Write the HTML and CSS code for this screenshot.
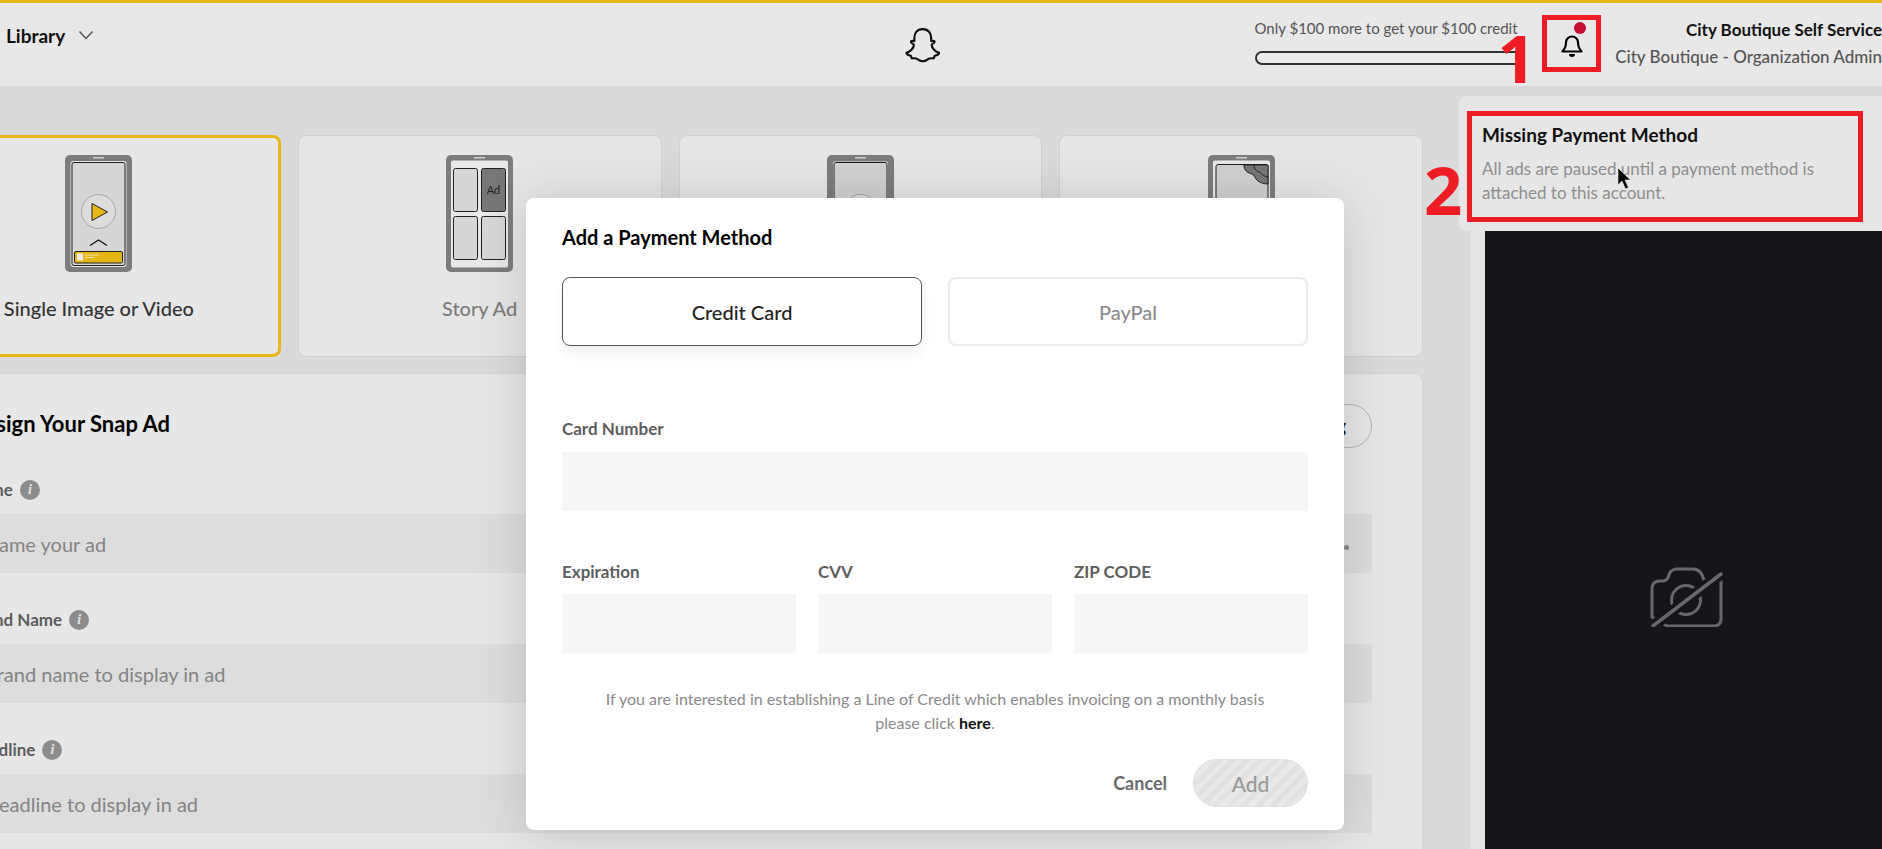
FILE: index.html
```html
<!DOCTYPE html>
<html lang="en">
<head>
<meta charset="utf-8">
<title>Add a Payment Method</title>
<link rel="stylesheet" href="styles.css">
</head>
<body>
<div class="page">
  <header class="topbar">
    <div class="nav-left">
      <span class="nav-title">Library</span>
      <svg class="chev" viewBox="0 0 16 10" width="16" height="10"><path d="M1.5 1.5 8 8.5l6.500-7" fill="none" stroke="#555" stroke-width="1.500"/></svg>
    </div>
    <svg class="ghost" viewBox="0 0 36 36" width="36" height="38"><path d="M18 2C11.500 2 9.500 7 9.500 11v3c-1.500 0-3-.5-3.500.5-.5 1.500 2.500 2 3 3.500 0 3-4 7-7.500 8 0 2 3.500 2.500 4.500 3 .5 1 .5 2.500 1 2.500 2 0 4-.5 6 1s3.500 2 5 2 3-.5 5-2 4-1 6-1c.5 0 .5-1.500 1-2.500 1-.5 4.500-1 4.500-3-3.500-1-7.500-5-7.500-8 .5-1.500 3.500-2 3-3.500-.5-1-2-.5-3.500-.5v-3C26.500 7 24.500 2 18 2Z" fill="none" stroke="#111" stroke-width="2.200" stroke-linejoin="round"/></svg>
    <div class="credit">
      <div class="credit-text">Only $100 more to get your $100 credit</div>
      <div class="credit-bar"></div>
      <span class="mark mark-one">1</span>
    </div>
    <div class="bell-box">
      <svg viewBox="0 0 22 24" width="22" height="24"><path d="M3.500 15.500c1-1.500 1.500-3 1.500-6a6 6 0 0 1 12 0c0 3 .5 4.500 1.500 6l2 3H1.500Z" fill="none" stroke="#000" stroke-width="2.200" stroke-linejoin="round"/><path d="M8 21h6a3 3 0 0 1-6 0Z" fill="#000"/></svg>
      <span class="bell-dot"></span>
    </div>
    <div class="account">
      <div class="account-name">City Boutique Self Service</div>
      <div class="account-org">City Boutique - Organization Admin</div>
    </div>
  </header>

  <div class="content">
    <main class="main">
      <section class="types">
        <article class="type-card is-selected">
          <svg class="phone" viewBox="0 0 67 117" width="67" height="117">
            <rect width="67" height="117" rx="5" fill="#7c7c7c"/>
            <rect x="28" y="2" width="11" height="1.500" fill="#d0d0d0"/>
            <rect x="6" y="6.500" width="55" height="105" rx="2" fill="#d6d6d6" stroke="#e8e8e8" stroke-width="1"/>
            <rect x="7" y="7.500" width="53" height="103" rx="2" fill="#d6d6d6" stroke="#1d1d1d" stroke-width="1"/>
            <circle cx="33.500" cy="56.500" r="17" fill="#dcdcdc" stroke="#999" stroke-width=".8"/>
            <path d="M27 48.500 42.500 57 27 65.500Z" fill="#e6b516" stroke="#222" stroke-width="1"/>
            <path d="M25 90.500 33.500 85 42 90.500" fill="none" stroke="#111" stroke-width="1.300"/>
            <rect x="9.500" y="96.500" width="48" height="11.500" rx="1.500" fill="#e6b516" stroke="#222" stroke-width="1"/>
            <rect x="12" y="98.500" width="6" height="7" fill="#eee"/>
            <path d="M20 100h14M20 102.500h9" stroke="#f3e3a8" stroke-width="1"/>
          </svg>
          <div class="type-label">Single Image or Video</div>
        </article>
        <article class="type-card">
          <svg class="phone" viewBox="0 0 67 117" width="67" height="117">
            <rect width="67" height="117" rx="5" fill="#7c7c7c"/>
            <rect x="28" y="2" width="11" height="1.500" fill="#d0d0d0"/>
            <rect x="5" y="5.500" width="57" height="107" rx="2" fill="#e8e8e8"/>
            <rect x="7.500" y="13.500" width="24" height="43" rx="2" fill="#d6d6d6" stroke="#222"/>
            <rect x="35.500" y="13.500" width="24" height="43" rx="2" fill="#777" stroke="#222"/>
            <rect x="7.500" y="61.500" width="24" height="43" rx="2" fill="#d6d6d6" stroke="#222"/>
            <rect x="35.500" y="61.500" width="24" height="43" rx="2" fill="#d6d6d6" stroke="#222"/>
            <text x="47.500" y="39" class="ad-text" text-anchor="middle">Ad</text>
          </svg>
          <div class="type-label is-muted">Story Ad</div>
        </article>
        <article class="type-card">
          <svg class="phone" viewBox="0 0 67 117" width="67" height="117">
            <rect width="67" height="117" rx="5" fill="#7c7c7c"/>
            <rect x="28" y="2" width="11" height="1.500" fill="#d0d0d0"/>
            <rect x="6" y="6.500" width="55" height="105" rx="2" fill="#e8e8e8"/>
            <rect x="7" y="7.500" width="53" height="103" rx="2" fill="#d0d0d0" stroke="#1d1d1d"/>
            <circle cx="33.500" cy="56.500" r="17" fill="#dcdcdc" stroke="#999" stroke-width=".8"/>
          </svg>
        </article>
        <article class="type-card">
          <svg class="phone" viewBox="0 0 67 117" width="67" height="117">
            <rect width="67" height="117" rx="5" fill="#7c7c7c"/>
            <rect x="28" y="2" width="11" height="1.500" fill="#d0d0d0"/>
            <rect x="5" y="5.500" width="57" height="107" rx="2" fill="#e8e8e8"/>
            <rect x="8" y="9.500" width="52" height="100" rx="2" fill="#d0d0d0" stroke="#1d1d1d"/>
            <path d="M36 10c0 6 4 8 8 9 3 1 3 5 6 7 3 2 6 3 10 3V10Z" fill="#777" stroke="#222"/>
            <path d="M46 10c0 5 3 6 5 7 3 1 3 4 9 5" fill="none" stroke="#222"/>
          </svg>
        </article>
      </section>

      <section class="design">
        <div class="design-head">
          <h2 class="design-title">Design Your Snap Ad</h2>
          <span class="pill">g</span>
        </div>
        <div class="field">
          <div class="field-label">Name <span class="info">i</span></div>
          <div class="field-input"><span>Name your ad</span><span class="input-dot"></span></div>
        </div>
        <div class="field">
          <div class="field-label">Brand Name <span class="info">i</span></div>
          <div class="field-input"><span>Brand name to display in ad</span></div>
        </div>
        <div class="field">
          <div class="field-label">Headline <span class="info">i</span></div>
          <div class="field-input"><span>Headline to display in ad</span></div>
        </div>
      </section>
    </main>

    <aside class="preview">
      <div class="preview-dark">
        <svg class="camera-off" viewBox="0 0 74 60" width="74" height="60">
          <path d="M2 50V22q0-8 8-8h3q4 0 6-6 1-5 7-6h18q6 1 8 6l2 5q8 1 17 1 0 0 0 0v38q0 7-8 7H17Z" fill="none" stroke="#68686b" stroke-width="3" stroke-linejoin="round"/>
          <circle cx="36" cy="33" r="14.500" fill="none" stroke="#68686b" stroke-width="3"/>
          <path d="M3 59 71 7" stroke="#15161a" stroke-width="11"/>
          <path d="M3 59 71 7" stroke="#68686b" stroke-width="3.500" stroke-linecap="round"/>
        </svg>
      </div>
    </aside>
  </div>

  <aside class="notice">
    <h3 class="notice-title">Missing Payment Method</h3>
    <p class="notice-text">All ads are paused until a payment method is attached to this account.</p>
    <span class="notice-frame"></span>
    <span class="mark mark-two">2</span>
    <svg class="cursor" viewBox="0 0 14 24" width="14" height="24"><path d="M1 1v17l4-4 3.500 8 3-1.500L8 13h5.500Z" fill="#000" stroke="#eee" stroke-width=".6"/></svg>
  </aside>

  <div class="modal">
    <h2 class="modal-title">Add a Payment Method</h2>
    <div class="tabs">
      <div class="tab is-active">Credit Card</div>
      <div class="tab">PayPal</div>
    </div>
    <label class="modal-label card-label">Card Number</label>
    <div class="modal-input"></div>
    <div class="modal-row">
      <div>
        <label class="modal-label">Expiration</label>
        <div class="modal-input"></div>
      </div>
      <div>
        <label class="modal-label">CVV</label>
        <div class="modal-input"></div>
      </div>
      <div>
        <label class="modal-label">ZIP CODE</label>
        <div class="modal-input"></div>
      </div>
    </div>
    <p class="help">If you are interested in establishing a Line of Credit which enables invoicing on a monthly basis<br>please click <a class="help-link">here</a>.</p>
    <div class="actions">
      <span class="cancel">Cancel</span>
      <span class="add">Add</span>
    </div>
  </div>
</div>
</body>
</html>
```
FILE: styles.css
```css
* { box-sizing: border-box; }
html, body { margin: 0; height: 100%; }
body { font-family: Lato, "Noto Sans", sans-serif; background: #d9d9d9; overflow: hidden; }
.page { position: relative; width: 1882px; height: 849px; overflow: hidden; background: linear-gradient(#d3d3d3, #dadada 60px); }

/* header */
.topbar { display: flex; align-items: flex-start; height: 86px; background: #e8e8e8; border-top: 3px solid #e6b718; }
.nav-left { display: flex; align-items: center; gap: 13px; width: 917px; height: 64px; padding-left: 6px; }
.nav-title { font-size: 19px; font-weight: 700; color: #111; }
.ghost { margin-top: 23px; }
.credit { position: relative; width: 273px; margin-left: 314px; padding-top: 15px; }
.credit-text { font-size: 15px; line-height: 20px; color: #555; white-space: nowrap; }
.credit-bar { height: 14px; margin-top: 13px; border: 2px solid #333; border-radius: 7px; background: #ececec; }
.mark { position: absolute; font-family: "Open Sans", sans-serif; font-weight: 700; font-size: 67px; line-height: 67px; color: #ee1c25; }
.mark-one { left: 243px; top: 21px; }
.bell-box { position: relative; display: flex; justify-content: center; align-items: flex-start; width: 60px; height: 57px; margin-left: 18px; margin-top: 12px; padding-top: 13px; border: 5px solid #ee1c25; }
.bell-box svg { margin-top: 0; }
.bell-dot { position: absolute; left: 27px; top: 2px; width: 12px; height: 12px; border-radius: 50%; background: #c60c30; }
.account { flex: none; margin-left: 14px; padding-top: 16px; text-align: right; font-size: 17px; line-height: 22px; white-space: nowrap; }
.account-name { font-weight: 700; color: #111; }
.account-org { margin-top: 5px; color: #555; font-weight: 500; }

/* content */
.content { display: flex; }
.main { flex: none; width: 1506px; margin-left: -83px; padding-top: 49px; }
.types { display: grid; grid-template-columns: repeat(4, 1fr); gap: 17px; }
.type-card { display: flex; flex-direction: column; align-items: center; height: 222px; padding-top: 19px; background: #e6e6e6; border: 1px solid #d0d0d0; border-radius: 8px; }
.type-card.is-selected { padding-top: 17px; border: 3px solid #e6b718; }
.type-label { margin-top: 22px; font-size: 20px; line-height: 28px; font-weight: 500; color: #333; }
.type-label.is-muted { color: #7c7c7c; }
.ad-text { font-family: Lato, sans-serif; font-size: 11px; fill: #222; }
.design { height: 520px; margin-top: 16px; padding: 30px 50px 0; background: #e7e7e7; border: 1px solid #d2d2d2; border-radius: 8px; }
.design-head { display: flex; align-items: center; justify-content: space-between; height: 44px; margin-bottom: 30px; }
.design-title { margin: -4px 0 0; font-size: 22px; line-height: 28px; font-weight: 700; color: #000; }
.pill { display: flex; align-items: center; justify-content: flex-end; width: 134px; height: 44px; padding-right: 25px; border: 1px solid #b4b4b4; border-radius: 22px; font-size: 18px; font-weight: 700; color: #111; }
.field { margin-bottom: 35px; }
.field-label { display: flex; align-items: center; gap: 7px; font-size: 17px; line-height: 24px; font-weight: 700; color: #5d5d5d; }
.info { display: inline-flex; align-items: center; justify-content: center; width: 20px; height: 20px; border-radius: 50%; background: #8c8c8c; color: #e4e4e4; font-family: "Liberation Serif", serif; font-style: italic; font-weight: 700; font-size: 14px; }
.field-input { display: flex; align-items: center; justify-content: space-between; height: 59px; margin-top: 12px; padding: 0 23px 0 16px; background: #dddddd; font-size: 20px; color: #848484; }
.input-dot { width: 5px; height: 5px; margin-top: 8px; border-radius: 50%; background: #888; }

/* preview */
.preview { flex: none; width: 411px; margin-left: 48px; margin-top: 20px; padding-left: 14px; background: #e6e6e6; height: 743px; }
.preview-dark { display: flex; justify-content: center; height: 100%; padding-top: 461px; background: #15161a; }
.camera-off { display: block; margin-left: 7px; }

/* notification */
.notice { position: absolute; left: 1459px; top: 96px; width: 423px; height: 135px; padding: 26px 0 0 23px; background: #e6e6e6; border-radius: 8px 0 0 8px; }
.notice-title { margin: 0; font-size: 19px; line-height: 26px; font-weight: 700; color: #111; }
.notice-text { margin: 9px 0 0; width: 380px; font-size: 17px; line-height: 24px; color: #8e8e8e; }
.notice-frame { position: absolute; left: 8px; top: 15px; width: 396px; height: 111px; border: 5px solid #ee1c25; }
.mark-two { left: -35px; top: 60px; }
.cursor { position: absolute; left: 158px; top: 71px; }

/* modal */
.modal { position: absolute; left: 526px; top: 198px; width: 818px; height: 632px; padding: 27px 36px 0; background: #fff; border-radius: 8px; box-shadow: 0 4px 50px rgba(0, 0, 0, .16); }
.modal-title { margin: 0; font-size: 20px; line-height: 24px; font-weight: 700; color: #000; }
.tabs { display: grid; grid-template-columns: 1fr 1fr; gap: 26px; margin-top: 28px; }
.tab { display: flex; align-items: center; justify-content: center; height: 69px; border: 2px solid #ececec; border-radius: 8px; font-size: 20px; font-weight: 500; color: #8b8b8b; }
.tab.is-active { border: 1.500px solid #555; color: #222; box-shadow: 0 8px 14px rgba(0, 0, 0, .06); }
.modal-label { display: block; font-size: 17px; line-height: 24px; font-weight: 700; color: #5d5d5d; }
.card-label { margin-top: 71px; }
.modal-input { height: 59px; margin-top: 11px; background: #f6f6f6; }
.modal-row { display: grid; grid-template-columns: repeat(3, 234px); gap: 22px; margin-top: 49px; }
.modal-row .modal-input { margin-top: 10px; }
.help { margin: 34px 0 0; text-align: center; font-size: 16px; line-height: 24px; color: #8a8a8a; }
.help-link { font-weight: 700; color: #111; }
.actions { display: flex; align-items: center; justify-content: flex-end; gap: 26px; margin-top: 24px; }
.cancel { font-size: 18px; font-weight: 700; color: #6a6a6a; }
.add { display: flex; align-items: center; justify-content: center; width: 115px; height: 48px; border: 1.500px solid #e0e0e0; border-radius: 24px; font-size: 21px; font-weight: 500; color: #9a9a9a; background: repeating-linear-gradient(135deg, #e9e9e9 0 5px, #e2e2e2 5px 10px); }
```
